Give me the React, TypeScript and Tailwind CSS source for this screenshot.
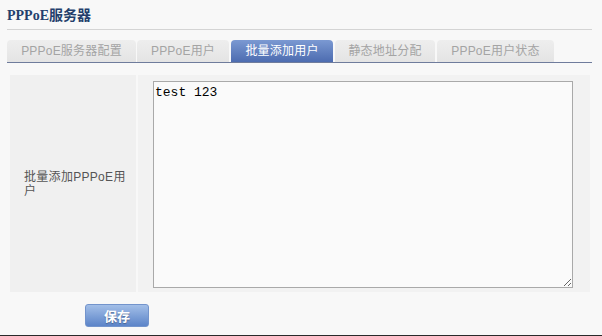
import React from "react";

const tabs = [
  { label: "PPPoE服务器配置", w: "w-[129px]", ml: "ml-0", active: false },
  { label: "PPPoE用户", w: "w-[92px]", ml: "ml-[1px]", active: false },
  { label: "批量添加用户", w: "w-[102px]", ml: "ml-[2px]", active: true },
  { label: "静态地址分配", w: "w-[100px]", ml: "ml-[2px]", active: false },
  { label: "PPPoE用户状态", w: "w-[117px]", ml: "ml-[2px]", active: false },
];

export default function App() {
  return (
    <div className="w-[602px] h-[336px] bg-[#f8f8f8] overflow-hidden flex flex-col font-['Liberation_Sans','Noto_Sans_CJK_SC',sans-serif] border-b border-[#2a2a2a]">
      <div className="pl-[7px] w-[592px]">
        <div className="h-[30px] border-b border-[#d4d4d4] pt-[6px]">
          <div className="text-[14px] leading-[20px] font-bold text-[#243f6c] font-['Liberation_Serif','Noto_Sans_CJK_SC',serif]">
            PPPoE服务器
          </div>
        </div>
        <div className="mt-[10px] flex items-end h-[23px] border-b border-[#6f7c9c]">
          {tabs.map((t) => (
            <div
              key={t.label}
              className={
                t.w +
                " " +
                t.ml +
                " h-[22px] rounded-t-[4px] flex items-center justify-center text-[12px] tracking-[0.2px] " +
                (t.active
                  ? "bg-gradient-to-b from-[#7b99d2] to-[#4d6cb0] text-white"
                  : "bg-gradient-to-b from-[#eeeeee] to-[#e4e4e4] text-[#a4a4a4]")
              }
            >
              {t.label}
            </div>
          ))}
        </div>
      </div>

      <div className="mt-[12px] ml-[10px] flex h-[217px] gap-[2px]">
        <div className="w-[126px] bg-[#f0f0f0] flex items-center pl-[14px] pr-[6px]">
          <div className="text-[12px] leading-[14px] text-[#555555] tracking-[0.3px]">批量添加PPPoE用户</div>
        </div>
        <div className="w-[452px] bg-[#f2f2f2] pl-[15px] pt-[6px]">
          <textarea
            defaultValue="test 123"
            className="block w-[420px] h-[207px] bg-[#fafafa] border border-[#a9a9a9] px-[1px] pt-[3px] text-[13px] leading-[15px] text-black font-['Liberation_Mono',monospace] outline-none resize"
          />
        </div>
      </div>

      <div className="mt-[12px] ml-[85px]">
        <button className="w-[64px] h-[23px] rounded-[3px] border border-[#7394cc] bg-gradient-to-b from-[#a3bfe8] to-[#5c84c8] text-white text-[13px] font-bold leading-none font-['Noto_Sans_CJK_SC',sans-serif] [text-shadow:0_1px_1px_rgba(0,0,0,0.3)]">
          保存
        </button>
      </div>
    </div>
  );
}
